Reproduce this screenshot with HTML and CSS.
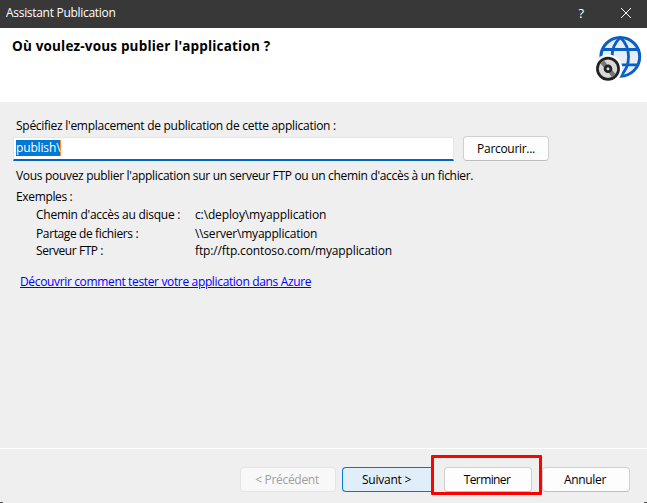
FILE: index.html
```html
<!DOCTYPE html>
<html lang="fr">
<head>
<meta charset="utf-8">
<title>Assistant Publication</title>
<link rel="stylesheet" href="styles.css">
</head>
<body>
<div class="window">
  <header class="titlebar">
    <span class="caption">Assistant Publication</span>
    <span class="help">?</span>
    <svg class="close" width="12" height="12" viewBox="0 0 12 12"><path d="M1 1l10 10M11 1L1 11"/></svg>
  </header>
  <section class="banner">
    <h1>Où voulez-vous publier l'application ?</h1>
    <svg class="globe" width="48" height="48" viewBox="0 0 48 48">
      <circle class="sea" cx="24.3" cy="21.8" r="19.4"/>
      <path class="lines" d="M7 14.5h35M7 29.8h35M24.3 2.5c-11 10-11 28.5 0 38.5M24.3 2.5c11 10 11 28.500 0 38.500"/>
      <circle class="halo" cx="12" cy="33.8" r="14.4"/>
      <circle class="disc" cx="12" cy="33.8" r="10.6"/>
      <path class="shine" d="M4.500 28.500l3.500-3.500 4 6-3 3zM19.500 39l-3.500 3.500-4-6 3-3z"/>
      <circle class="hub" cx="12" cy="33.8" r="2.9"/>
    </svg>
  </section>
  <main class="content">
    <p class="label">Spécifiez l'emplacement de publication de cette application :</p>
    <div class="row">
      <div class="field"><span class="selection">publish\</span></div>
      <div class="button browse">Parcourir...</div>
    </div>
    <p class="info">Vous pouvez publier l'application sur un serveur FTP ou un chemin d'accès à un fichier.</p>
    <p class="examples">Exemples :</p>
    <dl class="list">
      <dt>Chemin d'accès au disque :</dt><dd>c:\deploy\myapplication</dd>
      <dt class="share">Partage de fichiers :</dt><dd class="server">\\server\myapplication</dd>
      <dt class="ftp">Serveur FTP :</dt><dd>ftp://ftp.contoso.com/myapplication</dd>
    </dl>
    <a class="link">Découvrir comment tester votre application dans Azure</a>
  </main>
  <footer class="footer">
    <div class="button disabled">&lt; Précédent</div>
    <div class="button primary">Suivant &gt;</div>
    <div class="button finish">Terminer</div>
    <div class="button cancel">Annuler</div>
    <div class="highlight"></div>
    <i class="corner left"></i>
    <i class="corner right"></i>
  </footer>
</div>
</body>
</html>
```
FILE: styles.css
```css
* { box-sizing: border-box; }
body { margin: 0; font: 12px/16px "Open Sans", "Noto Sans", sans-serif; color: #000; }
h1, p, dl, dd { margin: 0; }
.window { width: 647px; height: 503px; display: flex; flex-direction: column; background: #efefef; overflow: hidden; }
.titlebar { height: 28px; background: #383838; color: #fff; display: flex; align-items: center; padding: 0 15px 2px 6px; }
.caption { flex: 1; letter-spacing: -0.3px; }
.help { font-size: 13px; margin-right: 36px; }
.close { stroke: #fff; fill: none; }
.banner { height: 74px; background: #fff; display: flex; justify-content: space-between; padding: 7px 3px 0 12px; }
h1 { font-size: 13.5px; line-height: 22px; letter-spacing: 0.18px; }
.sea { fill: #e6edf8; stroke: #0a5fc4; stroke-width: 3; }
.lines { fill: none; stroke: #0a5fc4; stroke-width: 2.8; }
.halo { fill: #fff; }
.disc { fill: #d8d8d8; stroke: #222; stroke-width: 2.7; }
.shine { fill: #777; }
.hub { fill: #ddd; stroke: #222; stroke-width: 2.8; }
.content { flex: 1; padding: 16px 16px 0; }
.label { letter-spacing: -0.27px; }
.row { display: flex; margin: 2px 0 0 -3px; }
.field { width: 441px; height: 24px; margin-top: 1px; background: #fff; border: 1px solid #e5e5e5; border-bottom: 2px solid #0067c0; padding: 1px 2px; }
.selection { display: inline-block; height: 16px; line-height: 16px; background: #0078d7; color: #fff; letter-spacing: -0.15px; border-right: 1px solid #ff8728; margin-top: 1px; }
.button { height: 25px; border: 1px solid #d0d0d0; border-bottom-color: #bdbdbd; border-radius: 4px; background: #fdfdfd; text-align: center; line-height: 24px; letter-spacing: -0.3px; }
.browse { width: 86px; margin-left: 9px; }
.info { margin-top: 7px; letter-spacing: -0.31px; }
.examples { margin-top: 5px; letter-spacing: -0.35px; }
.list { display: grid; grid-template-columns: 159px 1fr; grid-template-rows: 19px 17px 16px; margin: 2px 0 0 20px; }
dt { letter-spacing: -0.26px; }
dd { letter-spacing: -0.13px; }
.share { letter-spacing: -0.38px; }
.server { letter-spacing: -0.22px; }
.ftp { letter-spacing: -0.43px; }
.link { display: inline-block; margin: 15px 0 0 4px; color: #00f; text-decoration: underline; letter-spacing: -0.35px; }
.footer { height: 55px; border-top: 1px solid #fff; display: flex; padding: 18px 0 0 240px; position: relative; }
.disabled { width: 96px; color: #a0a0a0; background: #f8f8f8; border-color: #e5e5e5; padding-right: 2px; }
.primary { width: 91px; margin-left: 6px; padding-right: 3px; border-color: #0078d4; background: #e0eef9; border-radius: 4px 0 0 4px; border-right: 0; letter-spacing: -0.25px; }
.finish { width: 88px; margin-left: 11px; padding-right: 2px; letter-spacing: -0.6px; }
.cancel { width: 88px; margin-left: 10px; padding-right: 2px; }
.highlight { position: absolute; left: 431px; top: 6px; width: 111px; height: 40px; border: 3px solid #fe0000; border-radius: 1px; }
.corner { position: absolute; bottom: 0; height: 1px; background: #555; }
.left { left: 0; width: 3px; }
.right { right: 0; width: 3px; }
```
